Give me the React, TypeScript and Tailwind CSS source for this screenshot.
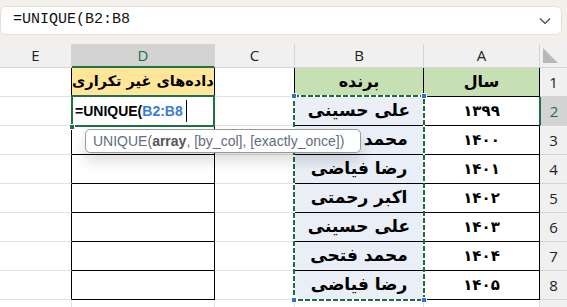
import React from 'react';

const COLS = 'grid grid-cols-[72px_143px_80px_129px_116px_27px] grid-rows-[29px]';
const FA = { fontFamily: '"DejaVu Sans", sans-serif' };

const data: [string, string][] = [
  ['۱۳۹۹', 'علی حسینی'],
  ['۱۴۰۰', 'محمد فتحی'],
  ['۱۴۰۱', 'رضا فیاضی'],
  ['۱۴۰۲', 'اکبر رحمتی'],
  ['۱۴۰۳', 'علی حسینی'],
  ['۱۴۰۴', 'محمد فتحی'],
  ['۱۴۰۵', 'رضا فیاضی'],
];

const HeaderRow: React.FC = () => (
  <div className="grid grid-cols-[72px_143px_80px_129px_116px_27px] grid-rows-[24px] h-[24px] bg-[#f0f0f0] font-['Open_Sans',sans-serif] text-[15px] text-[#222]">
    <div className="flex items-center justify-center border-r border-b border-[#d4d4d4]">E</div>
    <div className="flex items-center justify-center border-r border-[#d4d4d4] border-b-2 border-b-[#1e7145] bg-[#d3d3d3] text-[#1e7145]">D</div>
    <div className="flex items-center justify-center border-r border-b border-[#d4d4d4]">C</div>
    <div className="flex items-center justify-center border-r border-b border-[#d4d4d4]">B</div>
    <div className="flex items-center justify-center border-r border-b border-[#d4d4d4]">A</div>
    <div className="relative border-b border-[#d4d4d4]">
      <svg className="absolute left-[3px] top-[4px]" width="16" height="16" viewBox="0 0 16 16">
        <polygon points="0,0 0,15 15,15" fill="#b7b7b7" />
      </svg>
    </div>
  </div>
);

const ActiveCell: React.FC = () => (
  <div className="relative flex items-center pl-[3px] border-r border-b border-black font-['Liberation_Sans',sans-serif] text-[14px] font-bold whitespace-nowrap">
    <span className="text-black">=UNIQUE(</span>
    <span className="text-[#3f7bd6]">B2:B8</span>
    <span className="ml-[3px] w-px h-[22px] bg-black" />
    <div className="absolute -left-[1px] -top-[2px] w-[144px] h-[32px] border-2 border-[#1e7145]" />
    <div className="absolute -left-[3px] top-[27px] w-[6px] h-[6px] bg-[#1e7145] border border-white" />
  </div>
);

const DataRow: React.FC<{ n: number; year: string; name: string }> = ({ n, year, name }) => {
  const sel = n === 2;
  return (
    <div className={`${COLS} h-[29px]`}>
      <div className="border-b border-[#e1e1e1] border-r border-r-black" />
      {sel ? (
        <ActiveCell />
      ) : (
        <div className="border-r border-b border-black" />
      )}
      <div className="border-b border-[#e1e1e1] border-r border-r-black" />
      <div className="flex items-center justify-center whitespace-nowrap border-r border-b border-black bg-[#e9eef7] text-[17px] font-bold text-black" style={FA}>
        {name}
      </div>
      <div className={`flex items-center justify-center border-b border-black border-r ${sel ? 'border-r-[#1e7145]' : ''} text-[15px] font-bold text-black`} style={FA}>
        {year}
      </div>
      <div className={`flex items-center justify-center border-b border-[#d4d4d4] font-['Open_Sans',sans-serif] text-[15px] ${sel ? 'bg-[#d3d3d3] text-[#1e7145] border-l border-l-[#1e7145]' : 'bg-[#f0f0f0] text-[#222]'}`}>
        {n}
      </div>
    </div>
  );
};

const App: React.FC = () => {
  return (
    <div className="relative w-[567px] h-[307px] overflow-hidden bg-white">
      {/* formula bar */}
      <div className="h-[44px] bg-[#f3efeb] pt-[6px] pr-[5px]">
        <div className="flex h-[29px] items-center justify-between rounded-[6px] border border-[#e4e0dc] bg-white pl-[12px] pr-[10px]">
          <span className="font-['Liberation_Mono',monospace] text-[15px] text-[#111]">=UNIQUE(B2:B8</span>
          <svg width="12" height="8" viewBox="0 0 12 8" fill="none" stroke="#444" strokeWidth="1.2">
            <path d="M1 1.5 L6 6.5 L11 1.5" />
          </svg>
        </div>
      </div>

      <HeaderRow />

      {/* row 1 */}
      <div className={`${COLS} h-[29px]`}>
        <div className="border-b border-[#e1e1e1] border-r border-r-black" />
        <div className="whitespace-nowrap pr-[4px] text-right leading-[27px] border-r border-b border-black bg-[#ffe699] text-[14.5px] font-bold text-black" style={FA}>
          داده‌های غیر تکراری
        </div>
        <div className="border-b border-[#e1e1e1] border-r border-r-black" />
        <div className="flex items-center justify-center border-r border-b border-black bg-[#c6e0b4] text-[16px] font-bold text-black" style={FA}>
          برنده
        </div>
        <div className="flex items-center justify-center border-r border-b border-black bg-[#c6e0b4] text-[16px] font-bold text-black" style={FA}>
          سال
        </div>
        <div className="flex items-center justify-center border-b border-[#d4d4d4] bg-[#f0f0f0] font-['Open_Sans',sans-serif] text-[15px] text-[#222]">
          1
        </div>
      </div>

      {data.map(([year, name], i) => (
        <DataRow key={i} n={i + 2} year={year} name={name} />
      ))}

      {/* row 9 */}
      <div className={`${COLS} h-[29px]`}>
        <div className="border-r border-b border-[#e1e1e1]" />
        <div className="border-r border-b border-[#e1e1e1]" />
        <div className="border-r border-b border-[#e1e1e1]" />
        <div className="border-r border-b border-[#e1e1e1]" />
        <div className="border-r border-b border-[#e1e1e1]" />
        <div className="flex items-start justify-center pt-[4px] bg-[#f0f0f0] font-['Open_Sans',sans-serif] text-[15px] text-[#222]">9</div>
      </div>

      {/* copy range B2:B8 */}
      <div className="absolute left-[293px] top-[95px] w-[132px] h-[206px]">
        <svg className="absolute inset-0" width="132" height="206">
          <rect x="1" y="1" width="130" height="204" fill="none" stroke="#ffffff" strokeWidth="2" />
          <rect x="1" y="1" width="130" height="204" fill="none" stroke="#1e6b3d" strokeWidth="2" strokeDasharray="5 2" />
        </svg>
        <div className="absolute -left-[2px] -top-[2px] w-[6px] h-[6px] bg-[#2f6fce] border border-white" />
        <div className="absolute -right-[2px] -top-[2px] w-[6px] h-[6px] bg-[#2f6fce] border border-white" />
        <div className="absolute -left-[2px] -bottom-[2px] w-[6px] h-[6px] bg-[#2f6fce] border border-white" />
        <div className="absolute -right-[2px] -bottom-[2px] w-[6px] h-[6px] bg-[#2f6fce] border border-white" />
      </div>

      {/* function tooltip */}
      <div className="absolute left-[85px] top-[129px] flex h-[24px] w-[276px] items-center rounded-[5px] border border-[#9a9a9a] bg-white pl-[7px] font-['Liberation_Sans',sans-serif] text-[14px] text-[#5f6e82] shadow-[0_8px_14px_rgba(0,0,0,0.14)]">
        UNIQUE(<span className="font-bold text-[#555]">array</span>, [by_col], [exactly_once])
      </div>
    </div>
  );
};

export default App;
